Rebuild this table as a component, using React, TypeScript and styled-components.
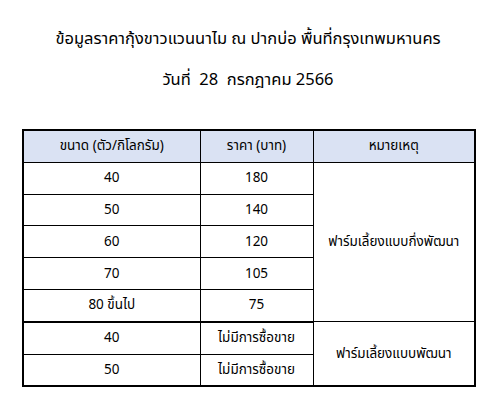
import React from 'react'
import styled, { createGlobalStyle } from 'styled-components'

const GlobalStyle = createGlobalStyle`
  html, body {
    margin: 0;
    padding: 0;
    background: #ffffff;
  }
  body {
    font-family: Tahoma, "Noto Sans Thai", "Noto Sans", "DejaVu Sans", sans-serif;
    color: #000;
  }
`

const rows = [
  { size: '40', price: '180' },
  { size: '50', price: '140' },
  { size: '60', price: '120' },
  { size: '70', price: '105' },
  { size: '80 ขึ้นไป', price: '75' },
]

const rows2 = [
  { size: '40', price: 'ไม่มีการซื้อขาย' },
  { size: '50', price: 'ไม่มีการซื้อขาย' },
]

export default function App() {
  return (
    <Page>
      <GlobalStyle />
      <Title>
        <TitleLine>ข้อมูลราคากุ้งขาวแวนนาไม ณ ปากบ่อ พื้นที่กรุงเทพมหานคร</TitleLine>
        <TitleLine>วันที่&nbsp; 28&nbsp; กรกฎาคม 2566</TitleLine>
      </Title>

      <Table>
        <colgroup>
          <col style={{ width: 177 }} />
          <col style={{ width: 113 }} />
          <col style={{ width: 162 }} />
        </colgroup>
        <thead>
          <tr>
            <HeadCell>ขนาด (ตัว/กิโลกรัม)</HeadCell>
            <HeadCell>ราคา (บาท)</HeadCell>
            <HeadCell>หมายเหตุ</HeadCell>
          </tr>
        </thead>
        <tbody>
          {rows.map((r, i) => (
            <tr key={'a' + i}>
              <Cell>{r.size}</Cell>
              <Cell>{r.price}</Cell>
              {i === 0 && <Cell rowSpan={rows.length}>ฟาร์มเลี้ยงแบบกึ่งพัฒนา</Cell>}
            </tr>
          ))}
          {rows2.map((r, i) => (
            <tr key={'b' + i}>
              <Cell $thickTop={i === 0}>{r.size}</Cell>
              <Cell $thickTop={i === 0}>{r.price}</Cell>
              {i === 0 && <Cell rowSpan={rows2.length}>ฟาร์มเลี้ยงแบบพัฒนา</Cell>}
            </tr>
          ))}
        </tbody>
      </Table>
    </Page>
  )
}

const Page = styled.div`
  width: 501px;
  height: 404px;
  padding: 27px 0 0 22px;
  box-sizing: border-box;
`

const Title = styled.div`
  width: 452px;
  display: flex;
  flex-direction: column;
  align-items: center;
  gap: 18px;
  margin-bottom: 38px;
`

const TitleLine = styled.div`
  font-size: 16.5px;
  line-height: 23px;
  white-space: nowrap;
`

const Table = styled.table`
  border-collapse: collapse;
  table-layout: fixed;
  width: 453px;
  border: 2px solid #000;
`

const HeadCell = styled.th`
  height: 30.8px;
  padding: 0;
  background: #dae2f3;
  border: 1px solid #000;
  font-size: 13.5px;
  font-weight: normal;
  text-align: center;
  vertical-align: middle;
`

const Cell = styled.td<{ $thickTop?: boolean }>`
  height: 30.8px;
  padding: 0;
  border: 1px solid #000;
  border-top-width: ${({ $thickTop }) => ($thickTop ? '2px' : '1px')};
  font-size: 13.5px;
  text-align: center;
  vertical-align: middle;
  white-space: nowrap;
`
